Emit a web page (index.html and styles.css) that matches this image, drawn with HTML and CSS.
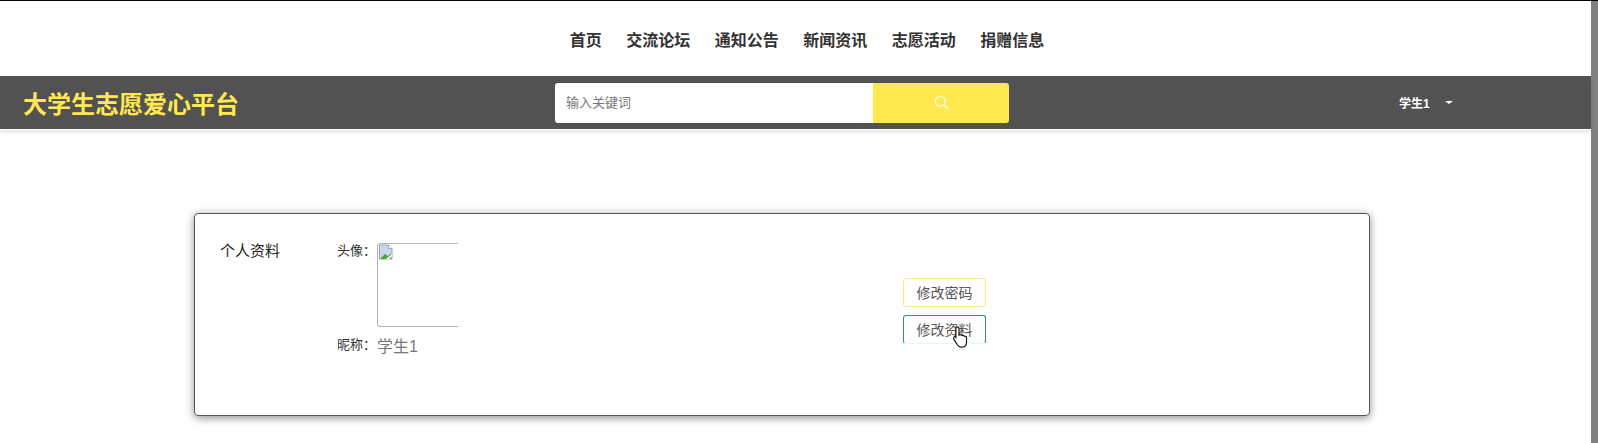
FILE: index.html
```html
<!DOCTYPE html>
<html lang="zh-CN">
<head>
<meta charset="utf-8">
<title>个人资料</title>
<link rel="stylesheet" href="styles.css">
</head>
<body>
<div class="page">
  <div class="main">
    <nav class="nav">
      <a>首页</a><a>交流论坛</a><a>通知公告</a><a>新闻资讯</a><a>志愿活动</a><a>捐赠信息</a>
    </nav>
    <header class="bar">
      <div class="logo">大学生志愿爱心平台</div>
      <div class="search">
        <div class="search-input">输入关键词</div>
        <div class="search-btn">
          <svg width="15" height="15" viewBox="0 0 15 15" fill="none" stroke="#fff" stroke-width="1.1"><circle cx="6.3" cy="6.3" r="5"/><path d="M10 10l4 4"/></svg>
        </div>
      </div>
      <div class="user"><span>学生1</span><i class="caret"></i></div>
    </header>
    <div class="content">
      <section class="card">
        <div class="card-title">个人资料</div>
        <div class="fields">
          <div class="field-avatar">
            <span class="label">头像：</span>
            <div class="avatar">
              <svg class="broken" width="16" height="16" viewBox="0 0 16 16"><path d="M1.5 1h9l3.5 3.5V15H1.5z" fill="#c9d6ee" stroke="#9aa5b8"/><path d="M10.5 1v3.5H14" fill="#fff" stroke="#9aa5b8"/><path d="M2 15l5-5 3 2 3-2.500V15z" fill="#4ea52f"/><path d="M8 15l6-5v2l-3 3z" fill="#fff"/></svg>
            </div>
          </div>
          <div class="field-name">
            <span class="label">昵称：</span><span class="value">学生1</span>
          </div>
        </div>
        <div class="actions">
          <button class="btn btn-yellow">修改密码</button>
          <button class="btn btn-green">修改资料</button>
          <svg class="cursor" width="18" height="24" viewBox="0 0 17 22"><path d="M5 1.500c1 0 1.600.7 1.600 1.700v6l1-.3c.6-.1 1 .1 1.300.5.6-.3 1.300-.1 1.600.4.700-.3 1.400 0 1.600.6.800-.2 1.600.3 1.600 1.200v4.400c0 2.500-1.500 4.500-4 4.500H8.500c-1.500 0-2.500-.7-3.300-1.900L1.700 13c-.5-.8-.3-1.600.3-2 .6-.4 1.300-.2 1.700.3V3.200C3.400 2.200 4 1.500 5 1.500z" fill="#fff" stroke="#111" stroke-width="1.100"/></svg>
        </div>
      </section>
    </div>
  </div>
  <div class="scrollbar"></div>
</div>
</body>
</html>
```
FILE: styles.css
```css
* { box-sizing: border-box; }
html, body { margin: 0; height: 100%; overflow: hidden; }
body {
  background: #fff;
  font-family: "Liberation Sans", "Noto Sans CJK SC", sans-serif;
  color: #333;
}
.page { display: flex; height: 443px; border-top: 1px solid #000; }
.main { flex: 1; min-width: 0; }
.scrollbar { width: 7px; background: #808080; }

.nav {
  height: 75px;
  display: flex;
  justify-content: center;
  align-items: center;
  gap: 24.5px;
  padding: 1px 0 0 23px;
  font-size: 16px;
  font-weight: 700;
  color: #333;
}

.bar {
  height: 53px;
  background: #525252;
  display: flex;
  align-items: center;
  position: relative;
  box-shadow: 0 1px 0 #fff, 0 3px 4px rgba(0,0,0,.12);
}
.logo {
  width: 555px;
  padding-left: 23px;
  font-size: 24px;
  font-weight: 700;
  color: #ffe94f;
}
.search { display: flex; width: 454px; height: 40px; border-radius: 3px; overflow: hidden; }
.search-input {
  width: 318px;
  background: #fff;
  padding-left: 11px;
  font-size: 13px;
  line-height: 40px;
  color: #777;
}
.search-btn {
  flex: 1;
  background: #ffe94f;
  display: flex;
  align-items: center;
  justify-content: center;
}
.user {
  margin-left: 390px;
  display: flex;
  align-items: center;
  color: #fff;
  font-size: 12px;
  font-weight: 700;
}
.caret {
  margin-left: 15px;
  width: 0;
  height: 0;
  border-left: 4px solid transparent;
  border-right: 4px solid transparent;
  border-top: 3.500px solid #fff;
}

.content { padding: 84px 221px 0 194px; }
.card {
  height: 203px;
  border: 1px solid #555;
  border-radius: 4px;
  box-shadow: 0 2px 8px rgba(0,0,0,.45);
  display: flex;
  padding: 28px 0 0 25px;
  position: relative;
}
.card-title { width: 117px; font-size: 15px; line-height: 18px; color: #222; }
.fields { width: 566px; }
.field-avatar { display: flex; }
.label { font-size: 13px; line-height: 18px; color: #333; width: 40px; flex: none; }
.avatar {
  width: 81px;
  height: 84px;
  border: 1px solid #b5b5b5;
  border-right: 0;
  border-radius: 3px 0 0 3px;
  margin-top: 1px;
}
.broken { display: block; }
.field-name { display: flex; align-items: center; margin-top: 6px; }
.value { font-size: 16px; color: #777; }

.actions {
  display: flex;
  flex-direction: column;
  gap: 8px;
  padding-top: 36px;
  position: relative;
  width: 83px;
}
.btn {
  width: 83px;
  height: 29px;
  background: #fff;
  border-radius: 3px;
  font: 14px "Liberation Sans", "Noto Sans CJK SC", sans-serif;
  color: #555;
  padding: 0 0 2px;
}
.btn-yellow { border: 1px solid #ffe97a; }
.btn-green { border: 1px solid #3f8a72; border-bottom-color: #d8fff6; }
.cursor { position: absolute; left: 49px; top: 83px; }
```
